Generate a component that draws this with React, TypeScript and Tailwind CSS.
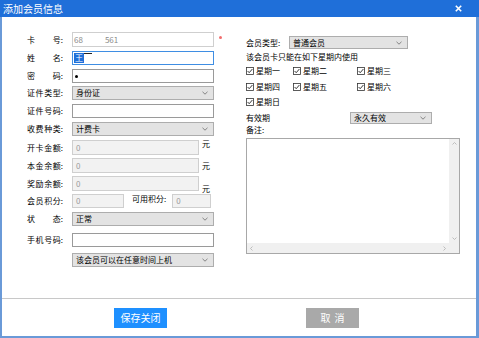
import React from "react";

const Chevron = () => (
  <svg width="6" height="4" viewBox="0 0 6 4" className="shrink-0">
    <path d="M0.5 0.8 L3 3.2 L5.5 0.8" fill="none" stroke="#6b6b6b" strokeWidth="0.8" />
  </svg>
);

const Label = ({ text }: { text: string }) => {
  const chars = text.split("");
  return (
    <div className="w-[36px] shrink-0 flex justify-between text-[8px] leading-[10px] text-black">
      {chars.map((c, i) => (
        <span key={i}>{i === chars.length - 1 ? c + ":" : c}</span>
      ))}
    </div>
  );
};

const Select = ({ value, w, h = "h-[14px]" }: { value: string; w: string; h?: string }) => (
  <div className={`${w} ${h} border border-[#adadad] bg-[#e3e3e3] flex items-center justify-between pl-[3px] pr-[5px] text-[8px] leading-[10px] text-black`}>
    <span>{value}</span>
    <Chevron />
  </div>
);

const Check = ({ label }: { label: string }) => (
  <div className="flex items-center gap-[2px] text-[8px] leading-[10px] text-black">
    <svg width="8" height="8" viewBox="0 0 8 8" className="shrink-0">
      <rect x="0.5" y="0.5" width="7" height="7" fill="#fff" stroke="#333" strokeWidth="0.8" />
      <path d="M1.6 4 L3.2 5.7 L6.4 2" fill="none" stroke="#222" strokeWidth="0.9" />
    </svg>
    <span>{label}</span>
  </div>
);

export default function App() {
  return (
    <div className="w-[479px] h-[338px] bg-white flex flex-col font-['Noto_Sans_CJK_SC',sans-serif] overflow-hidden">
      {/* title bar */}
      <div className="h-[17px] shrink-0 bg-[#1f6fd9] flex items-center justify-between pl-[3px] pr-[17px]">
        <span className="text-white text-[10px] leading-[12px]">添加会员信息</span>
        <svg width="7" height="7" viewBox="0 0 7 7">
          <path d="M0.8 0.8 L6.2 6.2 M6.2 0.8 L0.8 6.2" stroke="#fff" strokeWidth="1.6" />
        </svg>
      </div>
      <div className="flex-1 flex flex-col border-l-2 border-r-[3px] border-b-2 border-[#6a9ad8]">
        {/* main */}
        <div className="h-[282px] flex border-b border-[#c8c8c8]">
          {/* left column */}
          <div className="w-[219px] pl-[25px] flex flex-col">
            <div className="mt-[15px] h-[15px] flex items-center gap-[9px]">
              <Label text="卡号" />
              <div className="w-[142px] h-[15px] border border-[#cfcfcf] bg-white flex items-center pl-[1px] text-[8px] leading-[10px] text-[#8a8a8a] relative">
                <span>68</span>
                <span className="ml-[22px]">561</span>
                <span className="absolute left-[146px] top-[3px] w-[3px] h-[3px] rounded-full bg-[#f26d6d]"></span>
              </div>
            </div>
            <div className="mt-[4px] h-[14px] flex items-center gap-[9px]">
              <Label text="姓名" />
              <div className="w-[142px] h-[14px] border border-[#3f8ee3] bg-white flex items-center pl-[1px] text-[8px] leading-[10px]">
                <span className="bg-[#1e6fd9] text-white px-[1px] leading-[10px]">王</span>
                <span className="w-[8px] h-[7px] border-t border-[#222] self-start mt-[1px]"></span>
              </div>
            </div>
            <div className="mt-[4px] h-[14px] flex items-center gap-[9px]">
              <Label text="密码" />
              <div className="w-[142px] h-[14px] border border-[#9a9a9a] bg-white flex items-center pl-[2px]">
                <span className="w-[3px] h-[3px] rounded-full bg-black"></span>
              </div>
            </div>
            <div className="mt-[3px] h-[14px] flex items-center gap-[9px]">
              <Label text="证件类型" />
              <Select value="身份证" w="w-[142px]" />
            </div>
            <div className="mt-[4px] h-[14px] flex items-center gap-[9px]">
              <Label text="证件号码" />
              <div className="w-[142px] h-[14px] border border-[#9a9a9a] bg-white"></div>
            </div>
            <div className="mt-[4px] h-[14px] flex items-center gap-[9px]">
              <Label text="收费种类" />
              <Select value="计费卡" w="w-[142px]" />
            </div>
            <div className="mt-[4px] h-[15px] flex items-center gap-[9px]">
              <Label text="开卡金额" />
              <div className="w-[127px] h-[15px] border border-[#cfcfcf] bg-[#f2f2f2] flex items-center pl-[3px] text-[8px] leading-[10px] text-[#9a9a9a]">0</div>
              <span className="-ml-[6px] self-start text-[8px] leading-[10px] mt-[-1px]">元</span>
            </div>
            <div className="mt-[3px] h-[15px] flex items-center gap-[9px]">
              <Label text="本金余额" />
              <div className="w-[127px] h-[15px] border border-[#cfcfcf] bg-[#f2f2f2] flex items-center pl-[3px] text-[8px] leading-[10px] text-[#9a9a9a]">0</div>
              <span className="-ml-[6px] text-[8px] leading-[10px] mt-[1px]">元</span>
            </div>
            <div className="mt-[3px] h-[15px] flex items-center gap-[9px]">
              <Label text="奖励余额" />
              <div className="w-[127px] h-[15px] border border-[#cfcfcf] bg-[#f2f2f2] flex items-center pl-[3px] text-[8px] leading-[10px] text-[#9a9a9a]">0</div>
              <span className="-ml-[6px] self-end text-[8px] leading-[10px] mb-[-3px]">元</span>
            </div>
            <div className="mt-[3px] h-[14px] flex items-center gap-[9px]">
              <Label text="会员积分" />
              <div className="w-[52px] h-[14px] border border-[#cfcfcf] bg-[#f2f2f2] flex items-center pl-[3px] text-[8px] leading-[10px] text-[#9a9a9a]">0</div>
              <span className="ml-[-1px] text-[8px] leading-[10px] self-start">可用积分:</span>
              <div className="ml-[-3px] w-[39px] h-[14px] border border-[#cfcfcf] bg-[#f2f2f2] flex items-center pl-[3px] text-[8px] leading-[10px] text-[#9a9a9a]">0</div>
            </div>
            <div className="mt-[4px] h-[14px] flex items-center gap-[9px]">
              <Label text="状态" />
              <Select value="正常" w="w-[142px]" />
            </div>
            <div className="mt-[7px] h-[14px] flex items-center gap-[9px]">
              <Label text="手机号码" />
              <div className="w-[142px] h-[14px] border border-[#9a9a9a] bg-white"></div>
            </div>
            <div className="mt-[6px] h-[14px] flex items-center pl-[45px]">
              <Select value="该会员可以在任意时间上机" w="w-[142px]" />
            </div>
          </div>
          {/* right column */}
          <div className="flex-1 pl-[25px] flex flex-col text-[8px] leading-[10px] text-black">
            <div className="mt-[19px] h-[13px] flex items-center">
              <span className="w-[43px]">会员类型:</span>
              <Select value="普通会员" w="w-[119px]" h="h-[13px]" />
            </div>
            <div className="mt-[3px] h-[10px]">该会员卡只能在如下星期内使用</div>
            <div className="mt-[4px] h-[10px] flex">
              <div className="w-[47px]"><Check label="星期一" /></div>
              <div className="w-[64px]"><Check label="星期二" /></div>
              <div><Check label="星期三" /></div>
            </div>
            <div className="mt-[6px] h-[10px] flex">
              <div className="w-[47px]"><Check label="星期四" /></div>
              <div className="w-[64px]"><Check label="星期五" /></div>
              <div><Check label="星期六" /></div>
            </div>
            <div className="mt-[5px] h-[10px] flex">
              <Check label="星期日" />
            </div>
            <div className="mt-[5px] h-[12px] flex items-center">
              <span className="w-[104px]">有效期</span>
              <Select value="永久有效" w="w-[82px]" h="h-[12px]" />
            </div>
            <div className="mt-[1px] h-[10px]">备注:</div>
            <div className="mt-[3px] w-[214px] h-[116px] border border-[#a8a8a8] bg-white flex flex-col">
              <div className="flex-1 flex">
                <div className="flex-1"></div>
                <div className="w-[10px] bg-[#f0f0f0] flex flex-col items-center justify-between py-[3px]">
                  <svg width="5" height="3" viewBox="0 0 5 3"><path d="M0.5 2.5 L2.5 0.5 L4.5 2.5" fill="none" stroke="#b0b0b0" strokeWidth="0.8" /></svg>
                  <svg width="5" height="3" viewBox="0 0 5 3"><path d="M0.5 0.5 L2.5 2.5 L4.5 0.5" fill="none" stroke="#b0b0b0" strokeWidth="0.8" /></svg>
                </div>
              </div>
              <div className="h-[10px] flex">
                <div className="flex-1 bg-[#f0f0f0] flex items-center justify-between px-[3px]">
                  <svg width="3" height="5" viewBox="0 0 3 5"><path d="M2.5 0.5 L0.5 2.5 L2.5 4.5" fill="none" stroke="#b0b0b0" strokeWidth="0.8" /></svg>
                  <svg width="3" height="5" viewBox="0 0 3 5"><path d="M0.5 0.5 L2.5 2.5 L0.5 4.5" fill="none" stroke="#b0b0b0" strokeWidth="0.8" /></svg>
                </div>
                <div className="w-[10px] bg-[#f0f0f0]"></div>
              </div>
            </div>
          </div>
        </div>
        {/* footer */}
        <div className="flex-1 flex items-start pt-[9px] pl-[112px]">
          <div className="w-[53px] h-[20px] bg-[#1e90ff] flex items-center justify-center text-white text-[10px] leading-[12px]">保存关闭</div>
          <div className="ml-[139px] w-[53px] h-[20px] bg-[#a9a9a9] flex items-center justify-center text-white text-[10px] leading-[12px] tracking-[4px] pl-[4px]">取消</div>
        </div>
      </div>
    </div>
  );
}
